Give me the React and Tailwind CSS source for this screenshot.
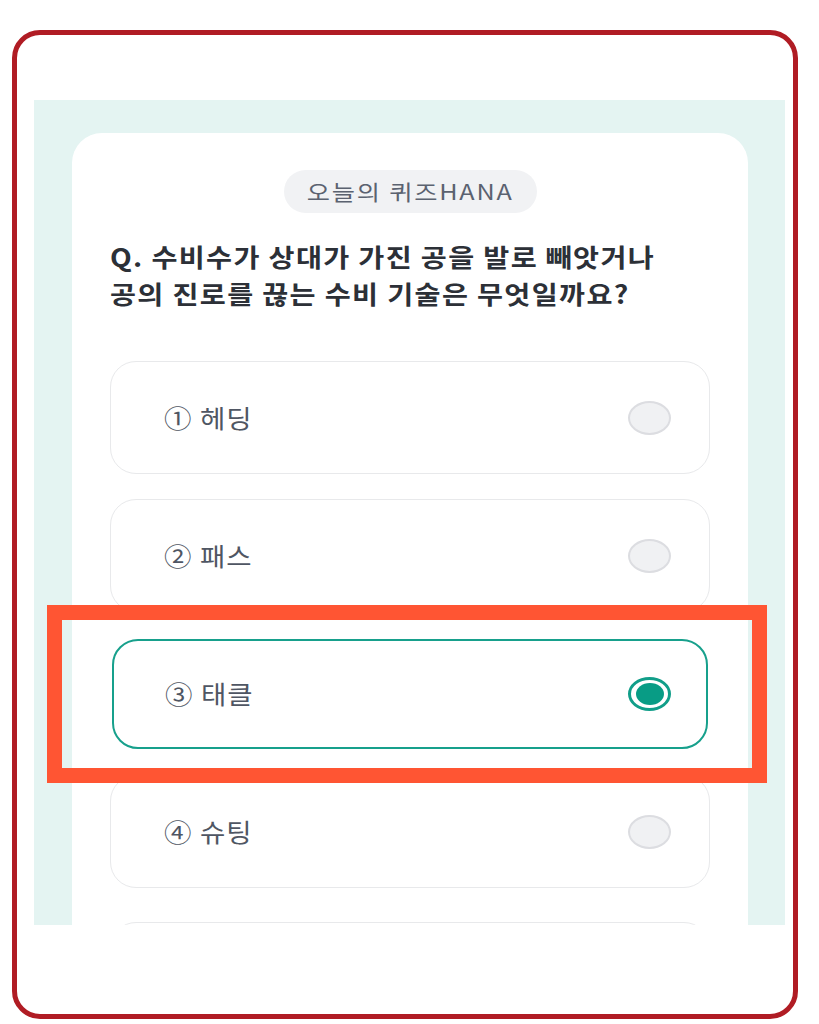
const options = [
  { id: 1, mark: '①', label: '헤딩' },
  { id: 2, mark: '②', label: '패스' },
  { id: 3, mark: '③', label: '태클' },
  { id: 4, mark: '④', label: '슈팅' },
  { id: 5, mark: '⑤', label: '드리블' },
];

function Radio({ checked }) {
  if (checked) {
    return (
      <span className="flex h-[34px] w-[43px] items-center justify-center rounded-[50%] border-[3px] border-[#119e89] bg-white">
        <span className="h-[22px] w-[28px] rounded-[50%] bg-[#089c85]" />
      </span>
    );
  }
  return <span className="h-[34px] w-[43px] rounded-[50%] border-2 border-[#dcdde1] bg-[#f0f1f3]" />;
}

function Option({ option, selected, last }) {
  return (
    <div className={`flex h-[113px] shrink-0 items-center ${last ? 'mt-[9px]' : ''}`}>
      <div
        className={
          selected
            ? 'mx-[2px] flex h-[110px] flex-1 items-center justify-between rounded-[26px] border-2 border-[#17a08c] bg-white pl-[51px] pr-[35px]'
            : 'flex h-full flex-1 items-center justify-between rounded-[26px] border border-[#e8e9eb] bg-white pl-[53px] pr-[38px]'
        }
      >
        <span className="origin-left scale-x-[1.1] text-[25px] leading-none tracking-[1px] text-[#4f5663]">
          {option.mark} {option.label}
        </span>
        <Radio checked={selected} />
      </div>
    </div>
  );
}

export default function App() {
  const selectedId = 3;

  return (
    <div
      className="relative h-[1024px] w-[819px] overflow-hidden bg-white px-[12px] pt-[30px]"
      style={{ fontFamily: '"Noto Sans CJK KR", "Noto Sans", sans-serif' }}
    >
      <div className="flex h-[989px] w-[786px] flex-col overflow-hidden rounded-[28px] border-[5px] border-[#b01c24] bg-white">
        <div className="ml-[17px] mr-[8px] mt-[65px] flex h-[825px] flex-col bg-[#e4f4f2] pl-[38px] pr-[37px] pt-[33px]">
          <div className="flex h-full flex-col overflow-hidden rounded-t-[30px] bg-white px-[38px] pt-[37px]">
            <div className="flex justify-center">
              <span className="flex h-[43px] w-[253px] items-center justify-center rounded-full bg-[#f1f2f4] text-[21px] tracking-[1.5px] text-[#5b6270]">
                <span className="scale-x-[1.2]">오늘의 퀴즈HANA</span>
              </span>
            </div>

            <h1 className="mt-[25px] origin-left scale-x-[1.13] text-[25px] font-bold leading-[37px] tracking-[1.2px] text-[#2c3037]">
              Q. 수비수가 상대가 가진 공을 발로 빼앗거나
              <br />
              공의 진로를 끊는 수비 기술은 무엇일까요?
            </h1>

            <div className="mt-[49px] flex flex-col gap-[25px]">
              {options.map((option, idx) => (
                <Option
                  key={option.id}
                  option={option}
                  selected={option.id === selectedId}
                  last={idx === options.length - 1}
                />
              ))}
            </div>
          </div>
        </div>
      </div>

      {/* annotation box drawn over the selected answer */}
      <div className="pointer-events-none absolute left-[47px] top-[605px] h-[178px] w-[720px] border-[15px] border-[#ff5533]" />
    </div>
  );
}
